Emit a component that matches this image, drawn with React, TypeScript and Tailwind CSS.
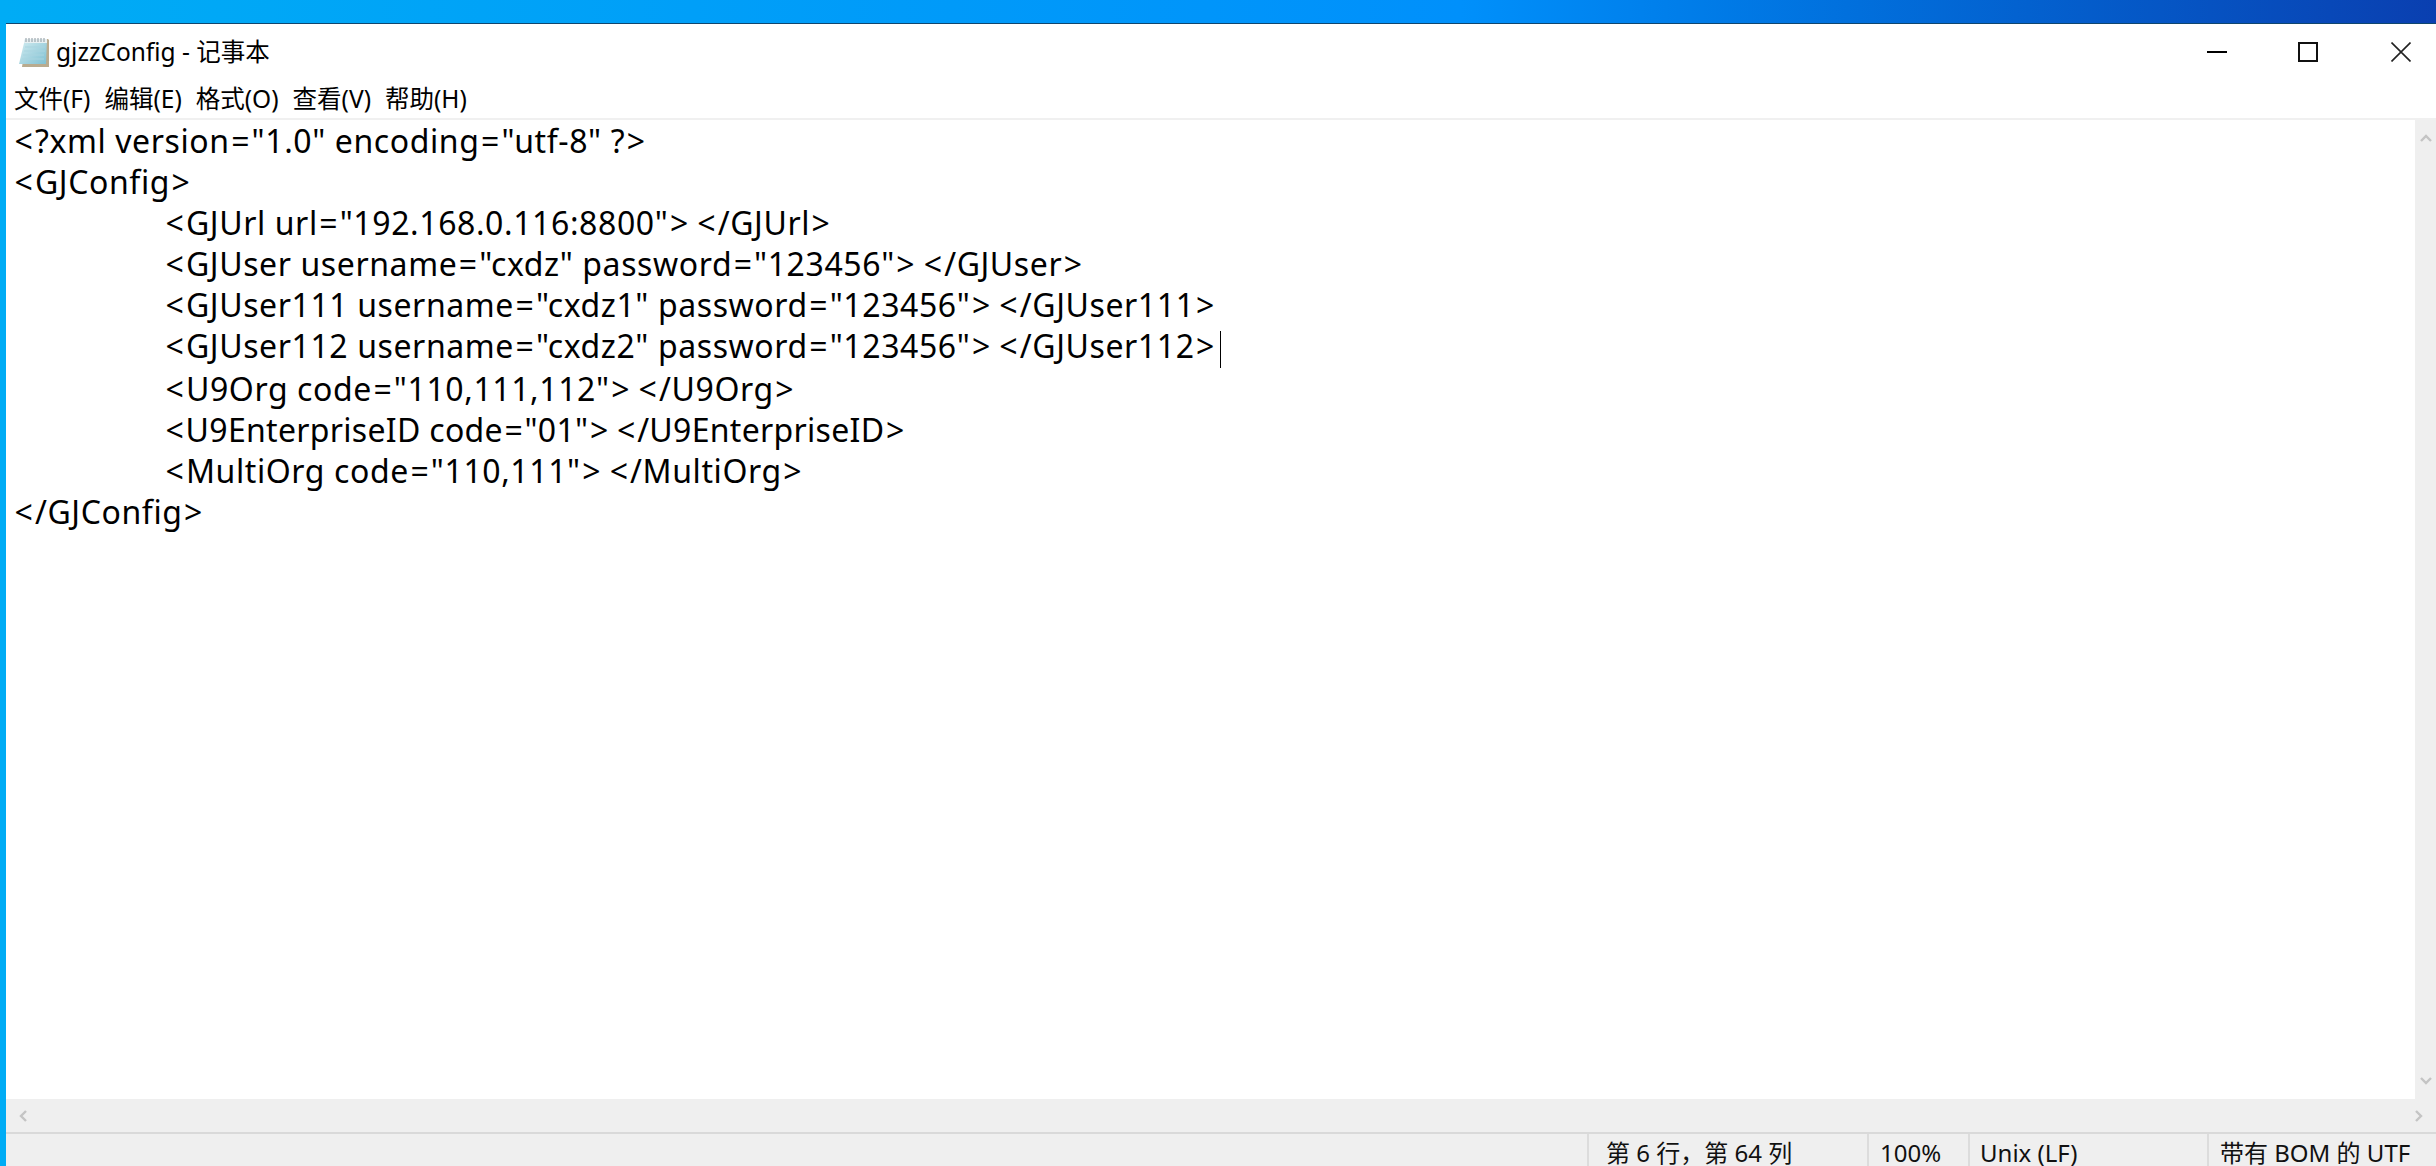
const FONT = "font-['Noto_Sans','Noto_Sans_CJK_SC',sans-serif]";

const lines: [boolean, string][] = [
  [false, '<?xml version="1.0" encoding="utf-8" ?>'],
  [false, '<GJConfig>'],
  [true, '<GJUrl url="192.168.0.116:8800"></GJUrl>'],
  [true, '<GJUser username="cxdz" password="123456"></GJUser>'],
  [true, '<GJUser111 username="cxdz1" password="123456"></GJUser111>'],
  [true, '<GJUser112 username="cxdz2" password="123456"></GJUser112>'],
  [true, '<U9Org code="110,111,112"></U9Org>'],
  [true, '<U9EnterpriseID code="01"></U9EnterpriseID>'],
  [true, '<MultiOrg code="110,111"></MultiOrg>'],
  [false, '</GJConfig>'],
];

const menus = ['文件(F)', '编辑(E)', '格式(O)', '查看(V)', '帮助(H)'];

function Line({ text }: { text: string }) {
  const parts = text.split(/([<>=])/);
  return (
    <>
      {parts.map((part, i) => {
        if (part === '<' && i > 1 && parts[i + 1].startsWith('/')) {
          return <span key={i} className="ml-[7px] mr-[1.5px]">{part}</span>;
        }
        return /^[<>=]$/.test(part) ? (
          <span key={i} className="mx-[1.5px]">{part}</span>
        ) : (
          <span key={i}>{part}</span>
        );
      })}
    </>
  );
}

function NotepadIcon() {
  return (
    <svg width="32" height="32" viewBox="0 0 32 32">
      <defs>
        <linearGradient id="pad" x1="0" y1="0" x2="1" y2="1">
          <stop offset="0" stopColor="#d6eef2" />
          <stop offset="1" stopColor="#7fc0d2" />
        </linearGradient>
      </defs>
      <path d="M8 3h22l1 1v27H4z" fill="#b9ab8f" />
      <path d="M7 3h22l-1 25H1z" fill="url(#pad)" />
      <path d="M7 3h22v4H6z" fill="#e8f0f2" />
      <path d="M8 2v4M11 2v4M14 2v4M17 2v4M20 2v4M23 2v4M26 2v4" stroke="#8b98a0" strokeWidth="1" />
      <path d="M7 11h20M6 15h21M5 19h21M4 23h22" stroke="#a9d4df" strokeWidth="1" />
    </svg>
  );
}

function Caret({ d }: { d: string }) {
  return (
    <svg width="12" height="12" viewBox="0 0 12 12">
      <path d={d} fill="none" stroke="#c4c4c4" strokeWidth="2.4" />
    </svg>
  );
}

export default function App() {
  return (
    <div className={`${FONT} w-[2436px] h-[1166px] overflow-hidden flex flex-col pl-[6px] pt-[23px] bg-gradient-to-r from-[#00acf5] via-[#0090fb] via-60% to-[#0a3fb0]`}>
      <div className="flex-1 min-h-0 flex flex-col bg-white border-t border-[#10466e] text-black">
        <div className="h-[55px] shrink-0 flex items-center">
          <div className="ml-[12px] mr-[6px] flex items-center"><NotepadIcon /></div>
          <span className="text-[24.5px] leading-none pt-[2px]">gjzzConfig - 记事本</span>
          <div className="ml-auto mr-[25px] flex items-center h-full gap-[71px]">
            <div className="w-[20px] h-[2px] bg-black" />
            <div className="w-[20px] h-[20px] border-2 border-[#111]" />
            <svg className="ml-[2px]" width="20" height="20" viewBox="0 0 20 20"><path d="M0.5 0.5L19.5 19.5M19.5 0.5L0.5 19.5" stroke="#222" strokeWidth="1.6" /></svg>
          </div>
        </div>
        <div className="h-[41px] shrink-0 flex items-center pl-[8px] pt-[2px] gap-[14px] border-b-2 border-[#f0f0f0] text-[24.5px] leading-none">
          {menus.map((m) => <span key={m}>{m}</span>)}
        </div>
        <div className="flex-1 min-h-0 flex">
          <div className="flex-1 text-[32px] tracking-[0.6px] leading-[41px] whitespace-pre">
            {lines.map(([indent, text], i) => (
              <div key={i} className={`${indent ? 'pl-[158px]' : 'pl-[7px]'} ${i === 7 ? 'tracking-[0.3px]' : ''}`}>
                <Line text={text} />
                {i === 5 && <span className="inline-block align-middle w-[1px] h-[37px] ml-[3px] bg-black" />}
              </div>
            ))}
          </div>
          <div className="w-[21px] bg-[#efefef] flex flex-col justify-between items-center py-[12px]">
            <Caret d="M1 9l5-5 5 5" />
            <Caret d="M1 3l5 5 5-5" />
          </div>
        </div>
        <div className="h-[33px] shrink-0 bg-[#efefef] flex items-center justify-between pl-[12px] pr-[12px]">
          <Caret d="M8 1L3 6l5 5" />
          <Caret d="M4 1l5 5-5 5" />
        </div>
        <div className="h-[34px] shrink-0 bg-[#efefef] border-t-2 border-[#d9d9d9] flex text-[24px] leading-none text-[#111] overflow-hidden whitespace-nowrap">
          <div className="ml-[1581px] w-[280px] border-l-2 border-[#dcdcdc] pl-[17px] pt-[7px]">第 6 行，第 64 列</div>
          <div className="w-[101px] border-l-2 border-[#dcdcdc] pl-[11px] pt-[7px]">100%</div>
          <div className="w-[239px] border-l-2 border-[#dcdcdc] pl-[10px] pt-[7px]">Unix (LF)</div>
          <div className="flex-1 border-l-2 border-[#dcdcdc] pl-[11px] pt-[7px]">带有 BOM 的 UTF</div>
        </div>
      </div>
    </div>
  );
}
